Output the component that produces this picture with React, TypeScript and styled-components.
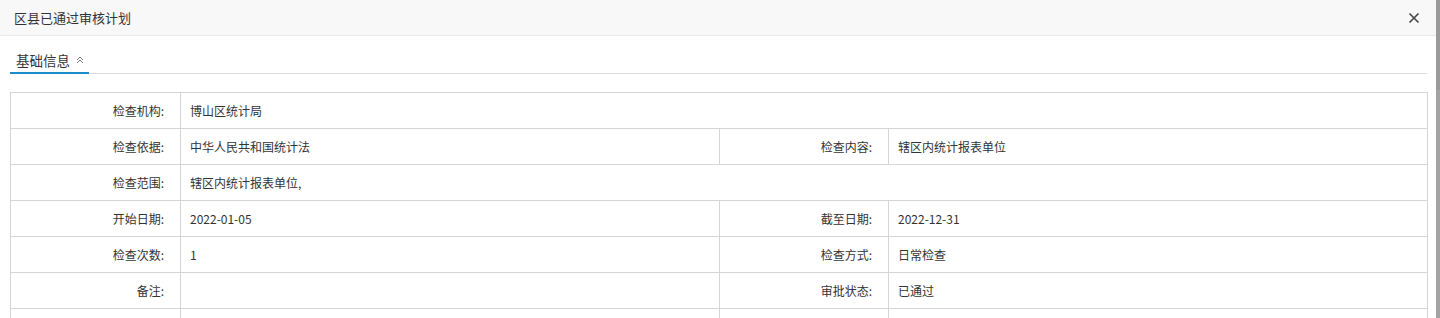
import React from "react";
import styled, { createGlobalStyle } from "styled-components";

const Global = createGlobalStyle`
  html, body { margin: 0; padding: 0; background: #fff; }
  body { font-family: "Microsoft YaHei", "Noto Sans CJK SC", "Noto Sans", sans-serif; color: #333; overflow: hidden; }
`;

const Page = styled.div`
  display: flex;
  width: 1440px;
  height: 318px;
  overflow: hidden;
`;

const Dialog = styled.div`
  flex: 1;
  display: flex;
  flex-direction: column;
  min-width: 0;
`;

const Scroll = styled.div`
  width: 4px;
  flex-shrink: 0;
  background: #a3a3a3;
  border-top: 90px solid #9a9a9a;
`;

const Header = styled.div`
  flex-shrink: 0;
  height: 35px;
  display: flex;
  align-items: center;
  justify-content: space-between;
  padding: 0 14px 0 14px;
  background: #f8f8f8;
  border-bottom: 1px solid #e8e8e8;
`;

const Title = styled.span`
  font-size: 13px;
  color: #333;
`;

const Close = styled.span`
  display: flex;
  width: 12px;
  height: 12px;
  margin-right: 2px;
`;

const Body = styled.div`
  flex-shrink: 0;
  padding: 11px 9px 0 10px;
  display: flex;
  flex-direction: column;
`;

const TabBar = styled.div`
  display: flex;
  border-bottom: 1px solid #ddd;
  height: 26px;
`;

const Tab = styled.div`
  display: flex;
  align-items: center;
  gap: 6px;
  padding: 0 5px 0 6px;
  font-size: 13.5px;
  color: #333;
  border-bottom: 2px solid #1a8ccc;
  margin-bottom: -1px;
`;

const Table = styled.table`
  margin-top: 18px;
  width: 1417px;
  border-collapse: collapse;
  table-layout: fixed;
  font-size: 12px;
`;

const Td = styled.td<{ $label?: boolean }>`
  height: 35px;
  border: 1px solid #d5d5d5;
  padding: 0 ${(p) => (p.$label ? "16px" : "10px")} 0 ${(p) => (p.$label ? "0" : "9px")};
  text-align: ${(p) => (p.$label ? "right" : "left")};
  color: #333;
  white-space: nowrap;
`;

type Row = [string, string, string?, string?];

const rows: Row[] = [
  ["检查机构:", "博山区统计局"],
  ["检查依据:", "中华人民共和国统计法", "检查内容:", "辖区内统计报表单位"],
  ["检查范围:", "辖区内统计报表单位,"],
  ["开始日期:", "2022-01-05", "截至日期:", "2022-12-31"],
  ["检查次数:", "1", "检查方式:", "日常检查"],
  ["备注:", "", "审批状态:", "已通过"],
  ["", "", "", ""],
];

export default function App() {
  return (
    <Page>
      <Global />
      <Dialog>
        <Header>
          <Title>区县已通过审核计划</Title>
          <Close>
            <svg width="12" height="12" viewBox="0 0 12 12">
              <path d="M1.5 1.5 L10.5 10.5 M10.5 1.5 L1.5 10.5" stroke="#444" strokeWidth="1.6" />
            </svg>
          </Close>
        </Header>
        <Body>
          <TabBar>
            <Tab>
              基础信息
              <svg width="8" height="8" viewBox="0 0 8 8">
                <path d="M1 4 L4 1 L7 4 M1 7 L4 4 L7 7" stroke="#777" strokeWidth="1" fill="none" />
              </svg>
            </Tab>
          </TabBar>
          <Table>
            <colgroup>
              <col style={{ width: 170 }} />
              <col style={{ width: 539 }} />
              <col style={{ width: 169 }} />
              <col style={{ width: 539 }} />
            </colgroup>
            <tbody>
              {rows.map((r, i) => (
                <tr key={i}>
                  <Td $label>{r[0]}</Td>
                  {r.length === 2 ? (
                    <Td colSpan={3}>{r[1]}</Td>
                  ) : (
                    <>
                      <Td>{r[1]}</Td>
                      <Td $label>{r[2]}</Td>
                      <Td>{r[3]}</Td>
                    </>
                  )}
                </tr>
              ))}
            </tbody>
          </Table>
        </Body>
      </Dialog>
      <Scroll />
    </Page>
  );
}
